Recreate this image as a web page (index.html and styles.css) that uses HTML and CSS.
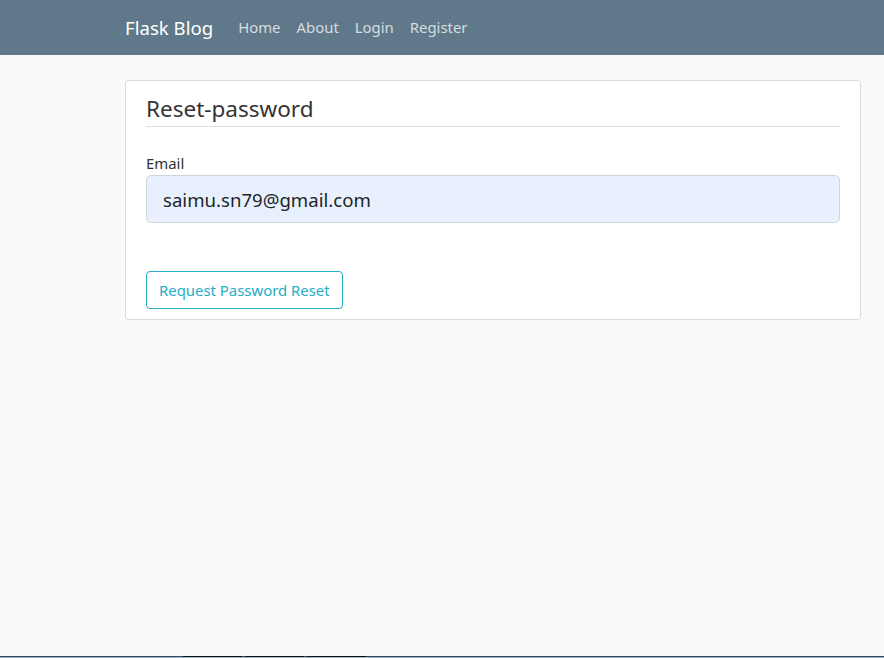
FILE: index.html
```html
<!DOCTYPE html>
<html lang="en">
<head>
<meta charset="utf-8">
<title>Flask Blog - Reset Password</title>
<link rel="stylesheet" href="styles.css">
</head>
<body>
<div class="page">
  <header class="navbar">
    <div class="nav-inner">
      <a class="brand" href="#">Flask Blog</a>
      <nav class="nav-links">
        <a class="nav-link" href="#">Home</a>
        <a class="nav-link" href="#">About</a>
        <a class="nav-link" href="#">Login</a>
        <a class="nav-link" href="#">Register</a>
      </nav>
    </div>
  </header>
  <main class="main">
    <section class="content-section">
      <form class="reset-form">
        <fieldset class="fieldset">
          <legend class="legend">Reset-password</legend>
          <div class="form-group">
            <label class="label" for="email">Email</label>
            <input class="input" id="email" type="email" value="saimu.sn79@gmail.com">
          </div>
        </fieldset>
        <div class="form-actions">
          <button class="btn-outline-info" type="button">Request Password Reset</button>
        </div>
      </form>
    </section>
  </main>
  <div class="taskbar">
    <div class="tb-top">
      <span class="tb-seg tb-a"></span>
      <span class="tb-seg tb-dark"></span>
      <span class="tb-seg tb-gap"></span>
      <span class="tb-seg tb-dark"></span>
      <span class="tb-seg tb-gap"></span>
      <span class="tb-seg tb-dark"></span>
      <span class="tb-seg tb-e"></span>
    </div>
    <div class="tb-bottom"></div>
  </div>
</div>
</body>
</html>
```

FILE: styles.css
```css
* { box-sizing: border-box; }
html, body { margin: 0; padding: 0; }
body {
  background: #fafafa;
  font-family: "Noto Sans", "Open Sans", sans-serif;
  color: #212529;
}
.page {
  display: flex;
  flex-direction: column;
  height: 100vh;
}
.navbar {
  background: #5f788a;
  height: 55px;
  flex: none;
}
.nav-inner {
  display: flex;
  align-items: center;
  height: 100%;
  padding-left: 125px;
  padding-bottom: 1px;
}
.brand {
  color: #ffffff;
  font-size: 18.6px;
  text-decoration: none;
  margin-right: 17px;
}
.nav-links {
  display: flex;
}
.nav-link {
  color: rgba(255, 255, 255, 0.75);
  text-decoration: none;
  font-size: 14.9px;
  padding: 0 8px;
}
.main {
  flex: 1;
  padding: 25px 23px 0 125px;
}
.content-section {
  background: #ffffff;
  border: 1px solid #dddddd;
  border-radius: 3px;
  padding: 10px 20px 10px 20px;
}
.reset-form { margin: 0; }
.fieldset {
  border: 0;
  margin: 0;
  padding: 0;
  min-width: 0;
}
.legend {
  display: block;
  width: 100%;
  padding: 0;
  font-size: 22.5px;
  line-height: 35px;
  color: #333333;
  border-bottom: 1px solid #dee2e6;
  margin-bottom: 24px;
}
.form-group {
  display: flex;
  flex-direction: column;
}
.label {
  font-size: 14.9px;
  line-height: 24px;
  margin-bottom: 0;
  color: #333333;
}
.input {
  height: 48px;
  padding: 0 16px;
  font-family: inherit;
  font-size: 18.6px;
  color: #212529;
  background: #e8f0fe;
  border: 1px solid #ced4da;
  border-radius: 4.8px;
  outline: none;
}
.form-actions {
  margin-top: 48px;
}
.btn-outline-info {
  height: 38px;
  padding: 0 12px;
  font-family: inherit;
  font-size: 14.9px;
  color: #26adc4;
  background: transparent;
  border: 1px solid #26adc4;
  border-radius: 4px;
}
.taskbar {
  flex: none;
  height: 2px;
  display: flex;
  flex-direction: column;
}
.tb-top {
  display: flex;
  height: 1px;
  background: #2c4a63;
}
.tb-bottom {
  height: 1px;
  background: #9fb8c8;
}
.tb-seg { display: block; height: 1px; }
.tb-a { width: 183px; }
.tb-dark { width: 59px; background: #111111; }
.tb-gap { width: 3px; }
.tb-e { flex: 1; }
```
